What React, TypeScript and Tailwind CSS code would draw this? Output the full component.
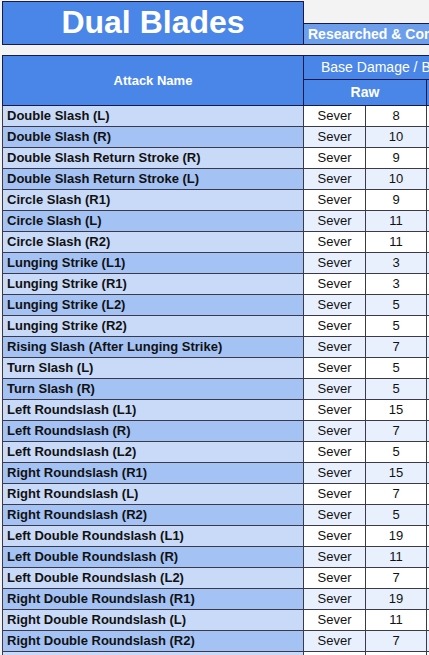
import React from "react";

const rows: [string, string, number][] = [
  ["Double Slash (L)", "Sever", 8],
  ["Double Slash (R)", "Sever", 10],
  ["Double Slash Return Stroke (R)", "Sever", 9],
  ["Double Slash Return Stroke (L)", "Sever", 10],
  ["Circle Slash (R1)", "Sever", 9],
  ["Circle Slash (L)", "Sever", 11],
  ["Circle Slash (R2)", "Sever", 11],
  ["Lunging Strike (L1)", "Sever", 3],
  ["Lunging Strike (R1)", "Sever", 3],
  ["Lunging Strike (L2)", "Sever", 5],
  ["Lunging Strike (R2)", "Sever", 5],
  ["Rising Slash (After Lunging Strike)", "Sever", 7],
  ["Turn Slash (L)", "Sever", 5],
  ["Turn Slash (R)", "Sever", 5],
  ["Left Roundslash (L1)", "Sever", 15],
  ["Left Roundslash (R)", "Sever", 7],
  ["Left Roundslash (L2)", "Sever", 5],
  ["Right Roundslash (R1)", "Sever", 15],
  ["Right Roundslash (L)", "Sever", 7],
  ["Right Roundslash (R2)", "Sever", 5],
  ["Left Double Roundslash (L1)", "Sever", 19],
  ["Left Double Roundslash (R)", "Sever", 11],
  ["Left Double Roundslash (L2)", "Sever", 7],
  ["Right Double Roundslash (R1)", "Sever", 19],
  ["Right Double Roundslash (L)", "Sever", 11],
  ["Right Double Roundslash (R2)", "Sever", 7],
  ["", "", 0],
];

export default function App() {
  return (
    <div
      className="w-[429px] h-[655px] overflow-hidden bg-[#f3f3f3] text-[#111]"
      style={{ fontFamily: '"Liberation Sans", Arial, sans-serif' }}
    >
      <div className="pl-[2px] pt-[2px] w-[600px]">
        <div className="flex items-end h-[43px]">
          <div className="w-[302px] h-[44px] shrink-0 border border-[#1a1a4a] bg-[#4a86e8] flex items-center justify-center text-white font-bold text-[32px] leading-none pb-[2px]">
            Dual Blades
          </div>
          <div className="h-[22px] flex-1 border-y border-r border-[#1a1a4a] bg-[#6d9eeb] text-white font-bold text-[14px] flex items-center pl-[4px] whitespace-nowrap overflow-hidden">
            Researched &amp; Compiled by
          </div>
        </div>
        <div className="h-[10px]" />
        <div className="flex">
          <div className="w-[302px] h-[51px] shrink-0 border border-[#1a1a4a] bg-[#4a86e8] flex items-center justify-center text-white font-bold text-[13px]">
            Attack Name
          </div>
          <div className="flex flex-col flex-1">
            <div className="h-[25px] border-y border-r border-[#1a1a4a] bg-[#4a86e8] text-white text-[14px] flex items-center pl-[17px] whitespace-nowrap overflow-hidden">
              Base Damage / Base Damage
            </div>
            <div className="flex h-[26px]">
              <div className="w-[123px] shrink-0 border-b border-r border-[#1a1a4a] bg-[#4a86e8] text-white font-bold text-[14px] flex items-center justify-center">
                Raw
              </div>
              <div className="flex-1 border-b border-[#1a1a4a] bg-[#4a86e8]" />
            </div>
          </div>
        </div>
        {rows.map(([name, type, val], i) => {
          const even = i % 2 === 1;
          return (
            <div key={i} className="flex h-[21px] border-b border-[#3a3a4a]">
              <div
                className={`w-[302px] shrink-0 border-l border-r border-[#3a3a4a] pl-[4px] flex items-center font-bold text-[13px] whitespace-nowrap ${
                  even ? "bg-[#a4c2f4]" : "bg-[#c9daf8]"
                }`}
              >
                {name}
              </div>
              <div
                className={`w-[62px] shrink-0 border-r border-[#3a3a4a] flex items-center justify-center text-[13px] ${
                  even ? "bg-[#e8f0fe]" : "bg-white"
                }`}
              >
                {type}
              </div>
              <div
                className={`w-[61px] shrink-0 border-r border-[#3a3a4a] flex items-center justify-center text-[13px] ${
                  even ? "bg-[#e8f0fe]" : "bg-white"
                }`}
              >
                {name ? val : ""}
              </div>
              <div className={`flex-1 ${even ? "bg-[#e8f0fe]" : "bg-white"}`} />
            </div>
          );
        })}
      </div>
    </div>
  );
}
